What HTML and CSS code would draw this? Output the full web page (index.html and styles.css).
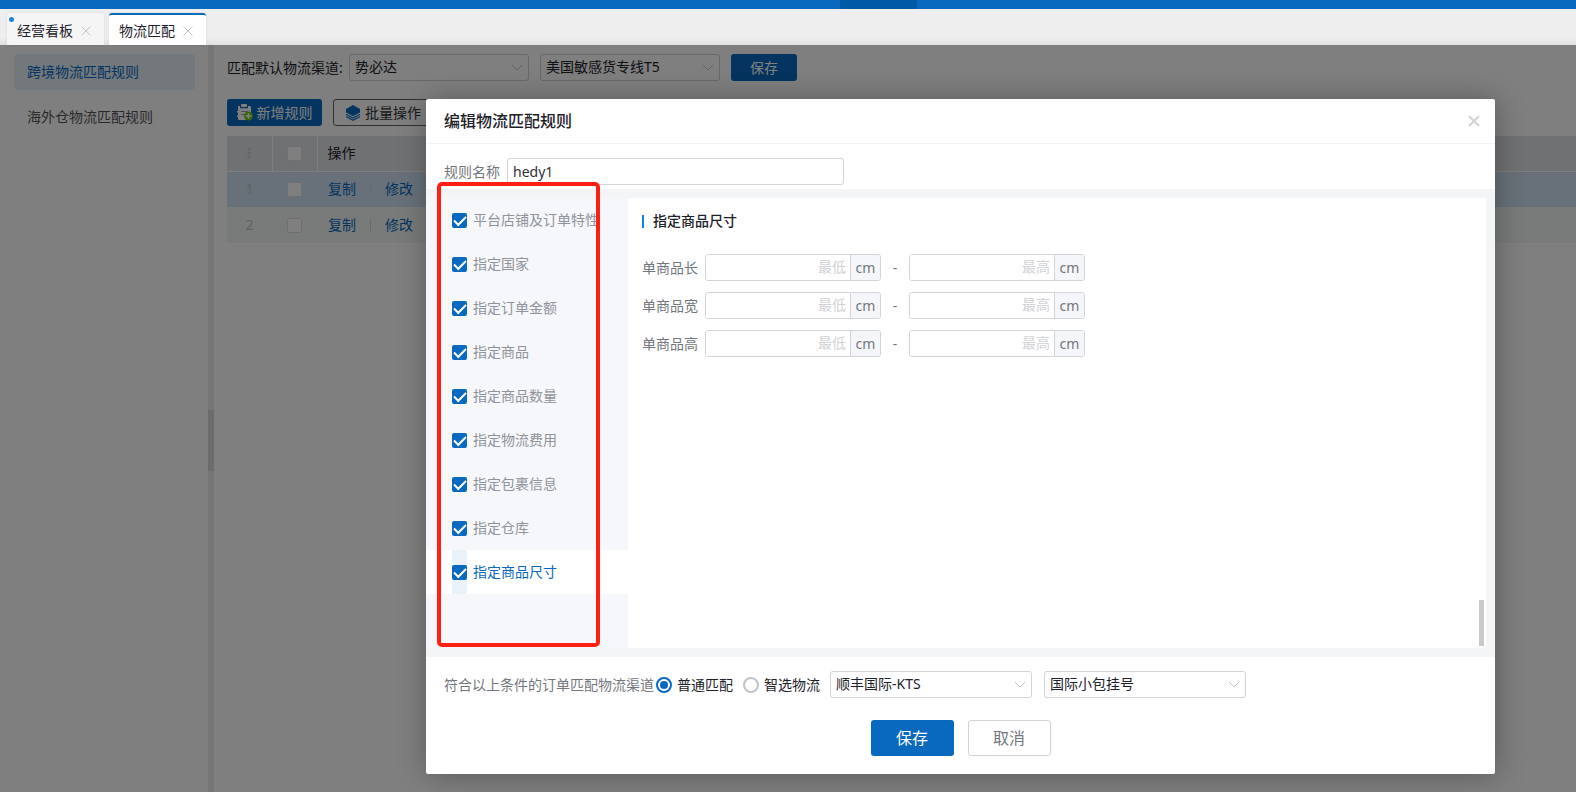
FILE: index.html
```html
<!DOCTYPE html>
<html lang="zh-CN">
<head>
<meta charset="utf-8">
<title>物流匹配</title>
<link rel="stylesheet" href="styles.css">
</head>
<body>
<header class="topbar"><div class="topbar-current"></div></header>
<nav class="tabs">
  <div class="tab">
    <span class="tab-dot"></span>
    <a class="tab-link" href="#board">经营看板</a>
    <button class="tab-close" type="button" aria-label="关闭"><svg viewBox="0 0 10 10"><path d="M.5.5l9 9M9.5.5l-9 9"/></svg></button>
  </div>
  <div class="tab tab-active">
    <a class="tab-link" href="#match">物流匹配</a>
    <button class="tab-close" type="button" aria-label="关闭"><svg viewBox="0 0 10 10"><path d="M.5.5l9 9M9.5.5l-9 9"/></svg></button>
  </div>
</nav>
<div class="workspace">
  <aside class="sidebar">
    <a class="side-link side-link-active" href="#cross">跨境物流匹配规则</a>
    <a class="side-link" href="#overseas">海外仓物流匹配规则</a>
  </aside>
  <div class="splitter"><div class="splitter-handle"></div></div>
  <main class="main">
    <form class="filter">
      <label for="channel">匹配默认物流渠道:</label>
      <span class="select">
        <select id="channel"><option>势必达</option></select>
        <svg viewBox="0 0 12 7"><path d="M1 1l5 5 5-5"/></svg>
      </span>
      <span class="select">
        <select aria-label="物流线路"><option>美国敏感货专线T5</option></select>
        <svg viewBox="0 0 12 7"><path d="M1 1l5 5 5-5"/></svg>
      </span>
      <button class="btn btn-primary filter-save" type="button">保存</button>
    </form>
    <div class="toolbar">
      <button class="btn btn-primary tool" type="button">
        <svg class="tool-icon" viewBox="0 0 16 17">
          <rect x="4" y="0" width="6" height="3" rx="1" fill="#fff"/>
          <path fill="#fff" d="M1 2h2v2.200h8V2h2a1 1 0 0 1 1 1v13H2a1 1 0 0 1-1-1v-2H0v-1.500h1V8.500H0V7h1z"/>
          <path stroke="#7fa9d0" fill="none" d="M4 7.500h7M4 10.500h4"/>
          <circle cx="11.500" cy="12" r="4.500" fill="#6fc916"/>
          <path stroke="#fff" stroke-width="1.600" d="M8.800 12h5.400M11.500 9.300v5.400"/>
        </svg>
        新增规则
      </button>
      <button class="btn btn-outline tool" type="button">
        <svg class="tool-icon" viewBox="0 0 16 17">
          <path fill="#0969bf" d="M8 1l7 4v3.500l-7 3.700-7-3.700V5z"/>
          <path stroke="#0969bf" stroke-width="1.200" fill="none" d="M1 10.300l7 3.700 7-3.700M1 12.500l7 3.700 7-3.700"/>
        </svg>
        批量操作
      </button>
    </div>
    <table class="rules">
      <thead>
        <tr>
          <th class="col-index"><svg class="dots" viewBox="0 0 4 12"><circle cx="2" cy="2" r="1.500"/><circle cx="2" cy="6" r="1.500"/><circle cx="2" cy="10" r="1.500"/></svg></th>
          <th class="col-check"><input class="row-check" type="checkbox" aria-label="全选"></th>
          <th class="col-ops">操作</th>
        </tr>
      </thead>
      <tbody>
        <tr class="row-selected">
          <td class="col-index">1</td>
          <td class="col-check"><input class="row-check" type="checkbox" aria-label="选择 1"></td>
          <td class="col-ops"><div class="ops"><a href="#copy1">复制</a><i></i><a href="#edit1">修改</a></div></td>
        </tr>
        <tr>
          <td class="col-index">2</td>
          <td class="col-check"><input class="row-check" type="checkbox" aria-label="选择 2"></td>
          <td class="col-ops"><div class="ops"><a href="#copy2">复制</a><i></i><a href="#edit2">修改</a></div></td>
        </tr>
      </tbody>
    </table>
  </main>

  <div class="overlay">
    <section class="modal" role="dialog" aria-labelledby="modal-title">
      <header class="modal-head">
        <h2 id="modal-title">编辑物流匹配规则</h2>
        <button class="modal-close" type="button" aria-label="关闭"><svg viewBox="0 0 12 12"><path d="M1 1l10 10M11 1L1 11"/></svg></button>
      </header>
      <div class="name-row">
        <label for="rule-name">规则名称</label>
        <input class="text-input" id="rule-name" type="text" value="hedy1">
      </div>
      <div class="modal-body">
        <div class="conditions">
          <label class="condition"><input type="checkbox" checked><span>平台店铺及订单特性</span></label>
          <label class="condition"><input type="checkbox" checked><span>指定国家</span></label>
          <label class="condition"><input type="checkbox" checked><span>指定订单金额</span></label>
          <label class="condition"><input type="checkbox" checked><span>指定商品</span></label>
          <label class="condition"><input type="checkbox" checked><span>指定商品数量</span></label>
          <label class="condition"><input type="checkbox" checked><span>指定物流费用</span></label>
          <label class="condition"><input type="checkbox" checked><span>指定包裹信息</span></label>
          <label class="condition"><input type="checkbox" checked><span>指定仓库</span></label>
          <label class="condition condition-active"><span class="check-strip"><input type="checkbox" checked></span><span>指定商品尺寸</span></label>
        </div>
        <div class="panel">
          <div class="panel-content">
            <h3>指定商品尺寸</h3>
            <div class="size-row">
              <label for="len-min">单商品长</label>
              <span class="unit-input"><input id="len-min" type="text" placeholder="最低"><span>cm</span></span>
              <span class="dash">-</span>
              <span class="unit-input"><input type="text" placeholder="最高" aria-label="单商品长最高"><span>cm</span></span>
            </div>
            <div class="size-row">
              <label for="wid-min">单商品宽</label>
              <span class="unit-input"><input id="wid-min" type="text" placeholder="最低"><span>cm</span></span>
              <span class="dash">-</span>
              <span class="unit-input"><input type="text" placeholder="最高" aria-label="单商品宽最高"><span>cm</span></span>
            </div>
            <div class="size-row">
              <label for="hei-min">单商品高</label>
              <span class="unit-input"><input id="hei-min" type="text" placeholder="最低"><span>cm</span></span>
              <span class="dash">-</span>
              <span class="unit-input"><input type="text" placeholder="最高" aria-label="单商品高最高"><span>cm</span></span>
            </div>
          </div>
          <div class="scroll-thumb"></div>
        </div>
      </div>
      <div class="match-row">
        <span class="match-label">符合以上条件的订单匹配物流渠道</span>
        <label class="radio"><input type="radio" name="mode" checked>普通匹配</label>
        <label class="radio"><input type="radio" name="mode">智选物流</label>
        <span class="select select-wide">
          <select aria-label="物流商"><option>顺丰国际-KTS</option></select>
          <svg viewBox="0 0 12 7"><path d="M1 1l5 5 5-5"/></svg>
        </span>
        <span class="select select-wide">
          <select aria-label="物流渠道"><option>国际小包挂号</option></select>
          <svg viewBox="0 0 12 7"><path d="M1 1l5 5 5-5"/></svg>
        </span>
      </div>
      <footer class="modal-foot">
        <button class="btn btn-primary btn-large" type="button">保存</button>
        <button class="btn btn-plain btn-large" type="button">取消</button>
      </footer>
      <div class="highlight"></div>
    </section>
  </div>
</div>
</body>
</html>
```
FILE: styles.css
```css
* { box-sizing: border-box; }
body {
  margin: 0;
  min-height: 100vh;
  display: flex;
  flex-direction: column;
  background: #fff;
  color: #1d2129;
  font: 14px/20px "Noto Sans", "Noto Sans CJK SC", sans-serif;
}
a { color: inherit; text-decoration: none; }
h2, h3 { margin: 0; }
button, input, select { font: inherit; color: inherit; margin: 0; }
button { padding: 0; border: 0; background: none; }

.topbar { height: 9px; background: #0969bf; }
.topbar-current { width: 77px; height: 9px; margin-left: 840px; background: #0059a7; }

.tabs {
  height: 36px;
  padding: 4px 7px 0;
  display: flex;
  gap: 5px;
  background: linear-gradient(#eee 80%, #e0e0e0);
}
.tab {
  position: relative;
  width: 97px;
  padding: 2px 10px 0;
  display: flex;
  align-items: center;
  justify-content: space-between;
  background: #f5f5f5;
  border-top: 2px solid #f5f5f5;
  border-radius: 3px 3px 0 0;
  box-shadow: 0 0 3px #d8d8d8;
}
.tab-active { background: #fff; border-top-color: #0969bf; }
.tab-dot { position: absolute; left: 2px; top: 2px; width: 5px; height: 5px; border-radius: 50%; background: #1c84d6; }
.tab-link { white-space: nowrap; }
.tab-close { width: 16px; height: 16px; display: grid; place-items: center; }
.tab-close svg { width: 10px; height: 10px; stroke: #c4c4c4; fill: none; }

.workspace { position: relative; flex: 1; display: flex; }
.sidebar { width: 208px; padding: 9px 13px 0 14px; display: flex; flex-direction: column; gap: 9px; }
.side-link { padding: 8px 13px; border-radius: 4px; color: #555; }
.side-link-active { background: #e6f1fa; color: #0969bf; }
.splitter { width: 6px; padding-top: 365px; background: #ececec; }
.splitter-handle { height: 61px; background: #d8d8d8; }

.main { flex: 1; min-width: 0; padding: 9px 0 0 13px; }
.filter { display: flex; align-items: center; gap: 11px; }
.filter label { width: 111px; white-space: nowrap; }
.filter-save { width: 66px; }
.select { display: grid; align-items: center; width: 180px; }
.select-wide { width: 202px; }
.select select {
  grid-area: 1 / 1;
  width: 100%;
  height: 27px;
  padding: 0 24px 1px 5px;
  appearance: none;
  background: #fff;
  border: 1px solid #d3d3d6;
  border-radius: 3px;
}
.select svg { grid-area: 1 / 1; justify-self: end; margin-right: 6px; width: 12px; height: 7px; fill: none; stroke: #c0c4cc; pointer-events: none; }

.btn { height: 27px; border-radius: 3px; white-space: nowrap; }
.btn-primary { background: #0969bf; color: #fff; }
.btn-outline { border: 1px solid #606266; color: #333; }
.btn-plain { border: 1px solid #d3d3d6; background: #fff; color: #73777d; }
.btn-large { width: 83px; height: 36px; font-size: 16px; }

.toolbar { display: flex; gap: 11px; padding: 18px 0 10px; }
.tool { width: 95px; display: flex; align-items: center; justify-content: center; gap: 4px; }
.tool.btn-outline { width: 100px; }
.tool-icon { width: 16px; height: 17px; }

.rules { width: 100%; border-collapse: collapse; table-layout: fixed; }
.rules th { height: 35px; padding: 0; background: #e0e2e6; border-bottom: 1px solid #fff; font-weight: 400; }
.rules th + th { border-left: 1px solid #fff; }
.rules td { height: 36px; padding: 0; background: #f0f6f4; }
.rules .row-selected td { background: #d1e2f2; }
.rules .col-index { width: 45px; text-align: center; color: #c0c4cc; }
.rules .col-check { width: 45px; text-align: center; }
.rules .col-ops { padding-left: 10px; text-align: left; }
.dots { display: block; margin: auto; width: 4px; height: 12px; fill: #c8cacf; }
.row-check { appearance: none; display: block; width: 15px; height: 15px; margin: auto; background: #fff; border: 1px solid #dcdfe6; border-radius: 2px; }
.ops { padding-left: 1px; display: flex; align-items: center; gap: 14px; color: #0969bf; }
.ops i { width: 1px; height: 12px; background: #d0d3d9; }

.overlay { position: absolute; inset: 0; padding: 54px 81px 18px 426px; background: rgba(0, 0, 0, 0.5); }
.modal { position: relative; min-height: 100%; background: #fff; border-radius: 2px; box-shadow: 1px 1px 30px rgba(0, 0, 0, 0.3); color: #73777d; }
.modal-head { height: 45px; padding: 0 15px 0 18px; display: flex; align-items: center; justify-content: space-between; border-bottom: 1px solid #f3f4f6; }
.modal-head h2 { font-size: 16px; font-weight: 500; color: #1d2129; }
.modal-close { width: 13px; height: 20px; display: grid; place-items: center; }
.modal-close svg { width: 12px; height: 12px; stroke: #d2d3d5; stroke-width: 2; fill: none; }
.name-row { padding: 14px 18px 4px; display: flex; align-items: center; gap: 7px; }
.text-input { width: 337px; height: 27px; padding: 0 5px 1px; border: 1px solid #d3d3d6; border-radius: 3px; color: #303133; }

.modal-body { display: flex; padding: 9px 9px 9px 0; background: #f4f5f7; }
.conditions { width: 202px; background: #f5f7fb; }
.condition { height: 44px; padding-left: 26px; display: flex; align-items: center; gap: 6px; color: #909399; white-space: nowrap; }
.condition-active { background: #fff; color: #0969bf; }
.check-strip { align-self: stretch; display: flex; align-items: center; background: #eaf2f9; }
.condition input { appearance: none; width: 15px; height: 15px; display: grid; place-items: center; background: #0969bf; border-radius: 2px; }
.condition input::before { content: ""; width: 10px; height: 5px; border: solid #fff; border-width: 0 0 2px 2px; transform: translateY(-1px) rotate(-45deg); }

.panel { flex: 1; min-height: 450px; padding: 13px 2px 2px 14px; display: flex; justify-content: space-between; background: #fff; }
.panel-content { display: flex; flex-direction: column; gap: 11px; }
.panel h3 { margin-bottom: 12px; display: flex; align-items: center; gap: 9px; font-size: 14px; font-weight: 500; color: #1d2129; }
.panel h3::before { content: ""; width: 2px; height: 13px; background: #0b7fee; }
.size-row { display: flex; align-items: center; }
.size-row label { width: 63px; }
.unit-input { width: 176px; height: 27px; display: flex; border: 1px solid #d3d5da; border-radius: 3px; overflow: hidden; }
.unit-input input { flex: 1; min-width: 0; padding: 0 4px 1px; border: 0; text-align: right; }
.unit-input input::placeholder { color: #d0d2d5; }
.unit-input span { width: 30px; line-height: 25px; border-left: 1px solid #d3d5da; background: #f5f6f9; text-align: center; }
.dash { width: 28px; text-align: center; }
.scroll-thumb { align-self: flex-end; width: 5px; height: 46px; background: #cacaca; }

.match-row { padding: 14px 18px 0; display: flex; align-items: center; color: #1d2129; white-space: nowrap; }
.match-label { margin-right: 2px; color: #73777d; }
.radio { margin-right: 10px; display: flex; align-items: center; gap: 5px; }
.radio input { appearance: none; width: 16px; height: 16px; display: grid; place-items: center; border: 2px solid #c0c4cc; border-radius: 50%; }
.radio input:checked { border-color: #0969bf; }
.radio input:checked::before { content: ""; width: 8px; height: 8px; border-radius: 50%; background: #0969bf; }
.match-row .select + .select { margin-left: 12px; }
.modal-foot { padding: 22px 0 18px; display: flex; justify-content: center; gap: 14px; }

.highlight { position: absolute; left: 11px; top: 83px; width: 163px; height: 465px; border: 4px solid #ff2013; border-radius: 5px; pointer-events: none; }
```
